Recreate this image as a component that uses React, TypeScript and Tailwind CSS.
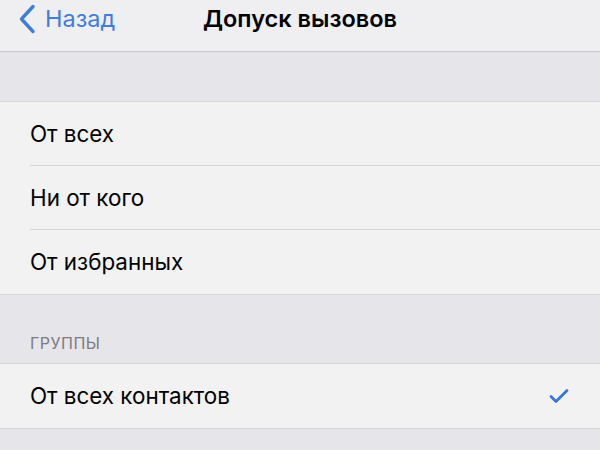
import React from "react";

const Row = ({ label, last, check }: { label: string; last?: boolean; check?: boolean }) => (
  <div className="relative flex h-[64px] items-center bg-[#f2f2f3] pl-[30px] pr-[30px]">
    <span className="flex-1 text-[22.4px] text-black">{label}</span>
    {check && (
      <svg width="20" height="16" viewBox="0 0 20 16" className="mr-[1px]">
        <path d="M2 8.5 L7 13.5 L18 2.5" fill="none" stroke="#3a76d8" strokeWidth="2.8" strokeLinecap="round" strokeLinejoin="round" />
      </svg>
    )}
    {!last && <div className="absolute bottom-0 left-[30px] right-0 h-px bg-[#d6d6d9]" />}
  </div>
);

export default function App() {
  return (
    <div className="h-[450px] w-[600px] overflow-hidden bg-[#e6e6ea]" style={{ fontFamily: "Inter, 'Noto Sans', sans-serif" }}>
      <div className="relative h-[52px] border-b border-[#c8c8cc] bg-[#efeff1]">
        <div className="absolute left-[18px] top-[4px] flex h-[30px] items-center text-[#3f7ddb]">
          <svg width="18" height="30" viewBox="0 0 18 30">
            <path d="M15 2.5 L3.5 15 L15 27.5" fill="none" stroke="#3f7ddb" strokeWidth="3.4" strokeLinecap="round" strokeLinejoin="round" />
          </svg>
          <span className="ml-[9px] text-[23.5px]">Назад</span>
        </div>
        <div className="absolute left-0 right-0 top-[4px] flex h-[30px] items-center justify-center text-[23.5px] font-semibold text-black">Допуск вызовов</div>
      </div>
      <div className="h-[50px] border-b border-[#d6d6d9]" />
      <Row label="От всех" />
      <Row label="Ни от кого" />
      <Row label="От избранных" last />
      <div className="flex h-[70px] items-end border-y border-[#d6d6d9] pb-[8px] pl-[30px]">
        <span className="text-[16px] tracking-[0.5px] text-[#7b7b80]">ГРУППЫ</span>
      </div>
      <Row label="От всех контактов" check last />
      <div className="border-t border-[#d6d6d9]" />
    </div>
  );
}
